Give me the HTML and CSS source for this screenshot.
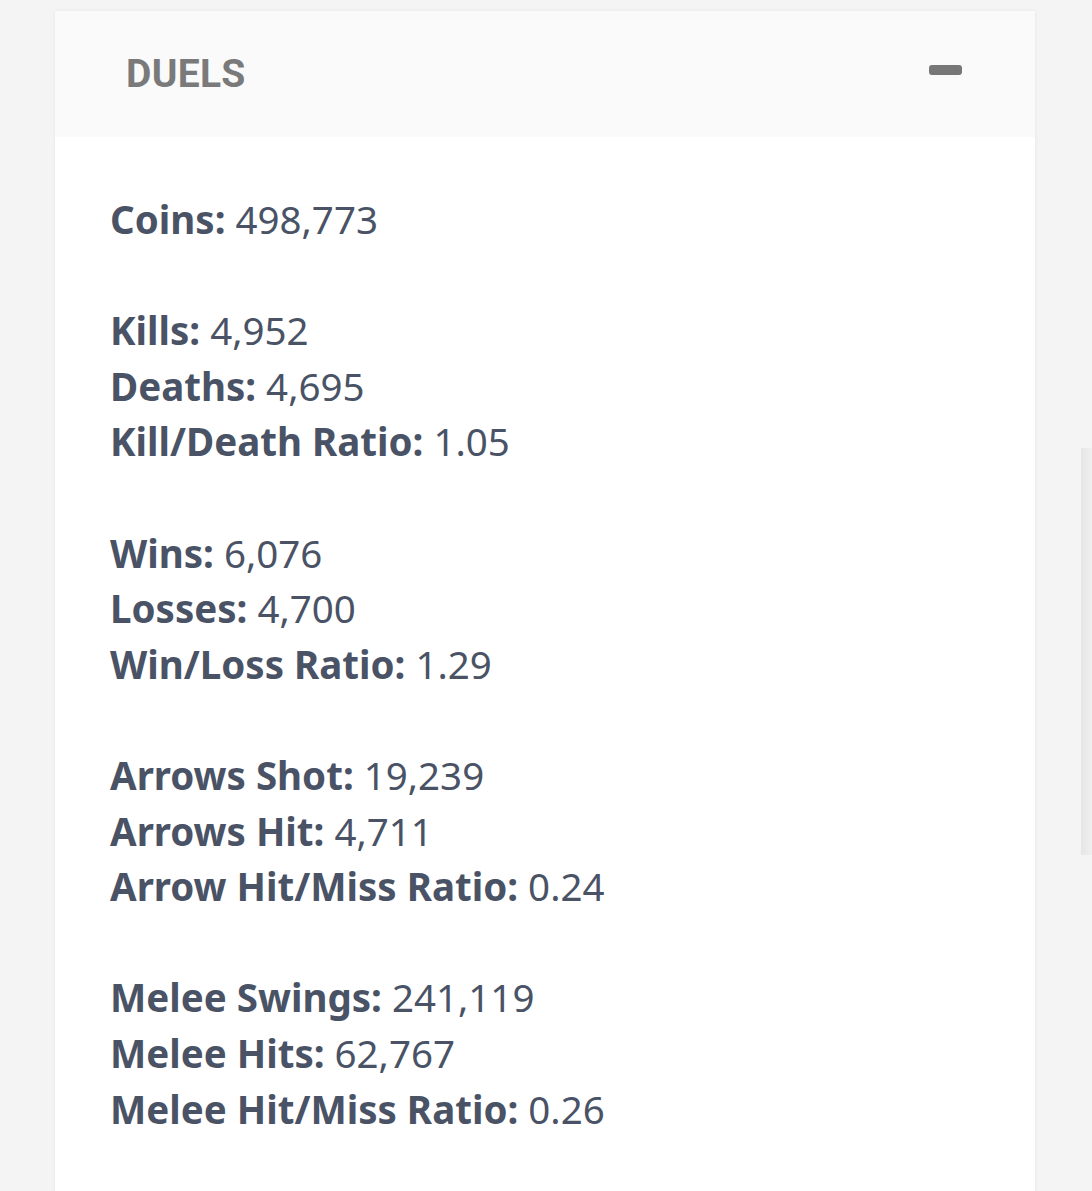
FILE: index.html
```html
<!DOCTYPE html>
<html>
<head>
<meta charset="utf-8">
<link rel="stylesheet" href="styles.css">
</head>
<body>
<div class="card">
  <div class="card-header">
    <h2 class="title">DUELS</h2>
    <span class="collapse-icon"></span>
  </div>
  <div class="card-body">
    <div class="group">
      <div class="row"><b>Coins:</b> 498,773</div>
    </div>
    <div class="group">
      <div class="row"><b>Kills:</b> 4,952</div>
      <div class="row"><b>Deaths:</b> 4,695</div>
      <div class="row"><b>Kill/Death Ratio:</b> 1.05</div>
    </div>
    <div class="group">
      <div class="row"><b>Wins:</b> 6,076</div>
      <div class="row"><b>Losses:</b> 4,700</div>
      <div class="row"><b>Win/Loss Ratio:</b> 1.29</div>
    </div>
    <div class="group">
      <div class="row"><b>Arrows Shot:</b> 19,239</div>
      <div class="row"><b>Arrows Hit:</b> 4,711</div>
      <div class="row"><b>Arrow Hit/Miss Ratio:</b> 0.24</div>
    </div>
    <div class="group">
      <div class="row"><b>Melee Swings:</b> 241,119</div>
      <div class="row"><b>Melee Hits:</b> 62,767</div>
      <div class="row"><b>Melee Hit/Miss Ratio:</b> 0.26</div>
    </div>
  </div>
</div>
<div class="scroll-thumb"></div>
</body>
</html>
```
FILE: styles.css
```css
html, body {
  margin: 0;
  padding: 0;
  background: #f4f4f4;
}
body {
  padding: 11px 57px 0 55px;
  font-family: "Noto Sans", "Open Sans", sans-serif;
  overflow: hidden;
}
.card {
  background: #ffffff;
  box-shadow: 0 0 4px rgba(0,0,0,0.06);
  width: 980px;
}
.card-header {
  background: #fafafa;
  height: 126px;
  display: flex;
  align-items: center;
  justify-content: space-between;
  padding: 0 73px 0 71px;
  box-sizing: border-box;
}
.title {
  margin: 0;
  font-family: Roboto, "Liberation Sans", sans-serif;
  font-weight: 700;
  font-size: 39px;
  color: #7a7a7a;
  letter-spacing: 0.3px;
}
.collapse-icon {
  display: block;
  width: 33px;
  height: 10px;
  border-radius: 3px;
  background: #777777;
  margin-top: -8px;
}
.card-body {
  padding: 55px 55px 80px 55px;
  color: #4a5366;
  font-size: 38.5px;
  line-height: 55.6px;
}
.group {
  margin-bottom: 55.6px;
}
.row b {
  font-weight: 700;
}
.scroll-thumb {
  position: fixed;
  left: 1081px;
  top: 448px;
  width: 11px;
  height: 407px;
  background: linear-gradient(to right, #e6e6e6, #efefef);
}
```
